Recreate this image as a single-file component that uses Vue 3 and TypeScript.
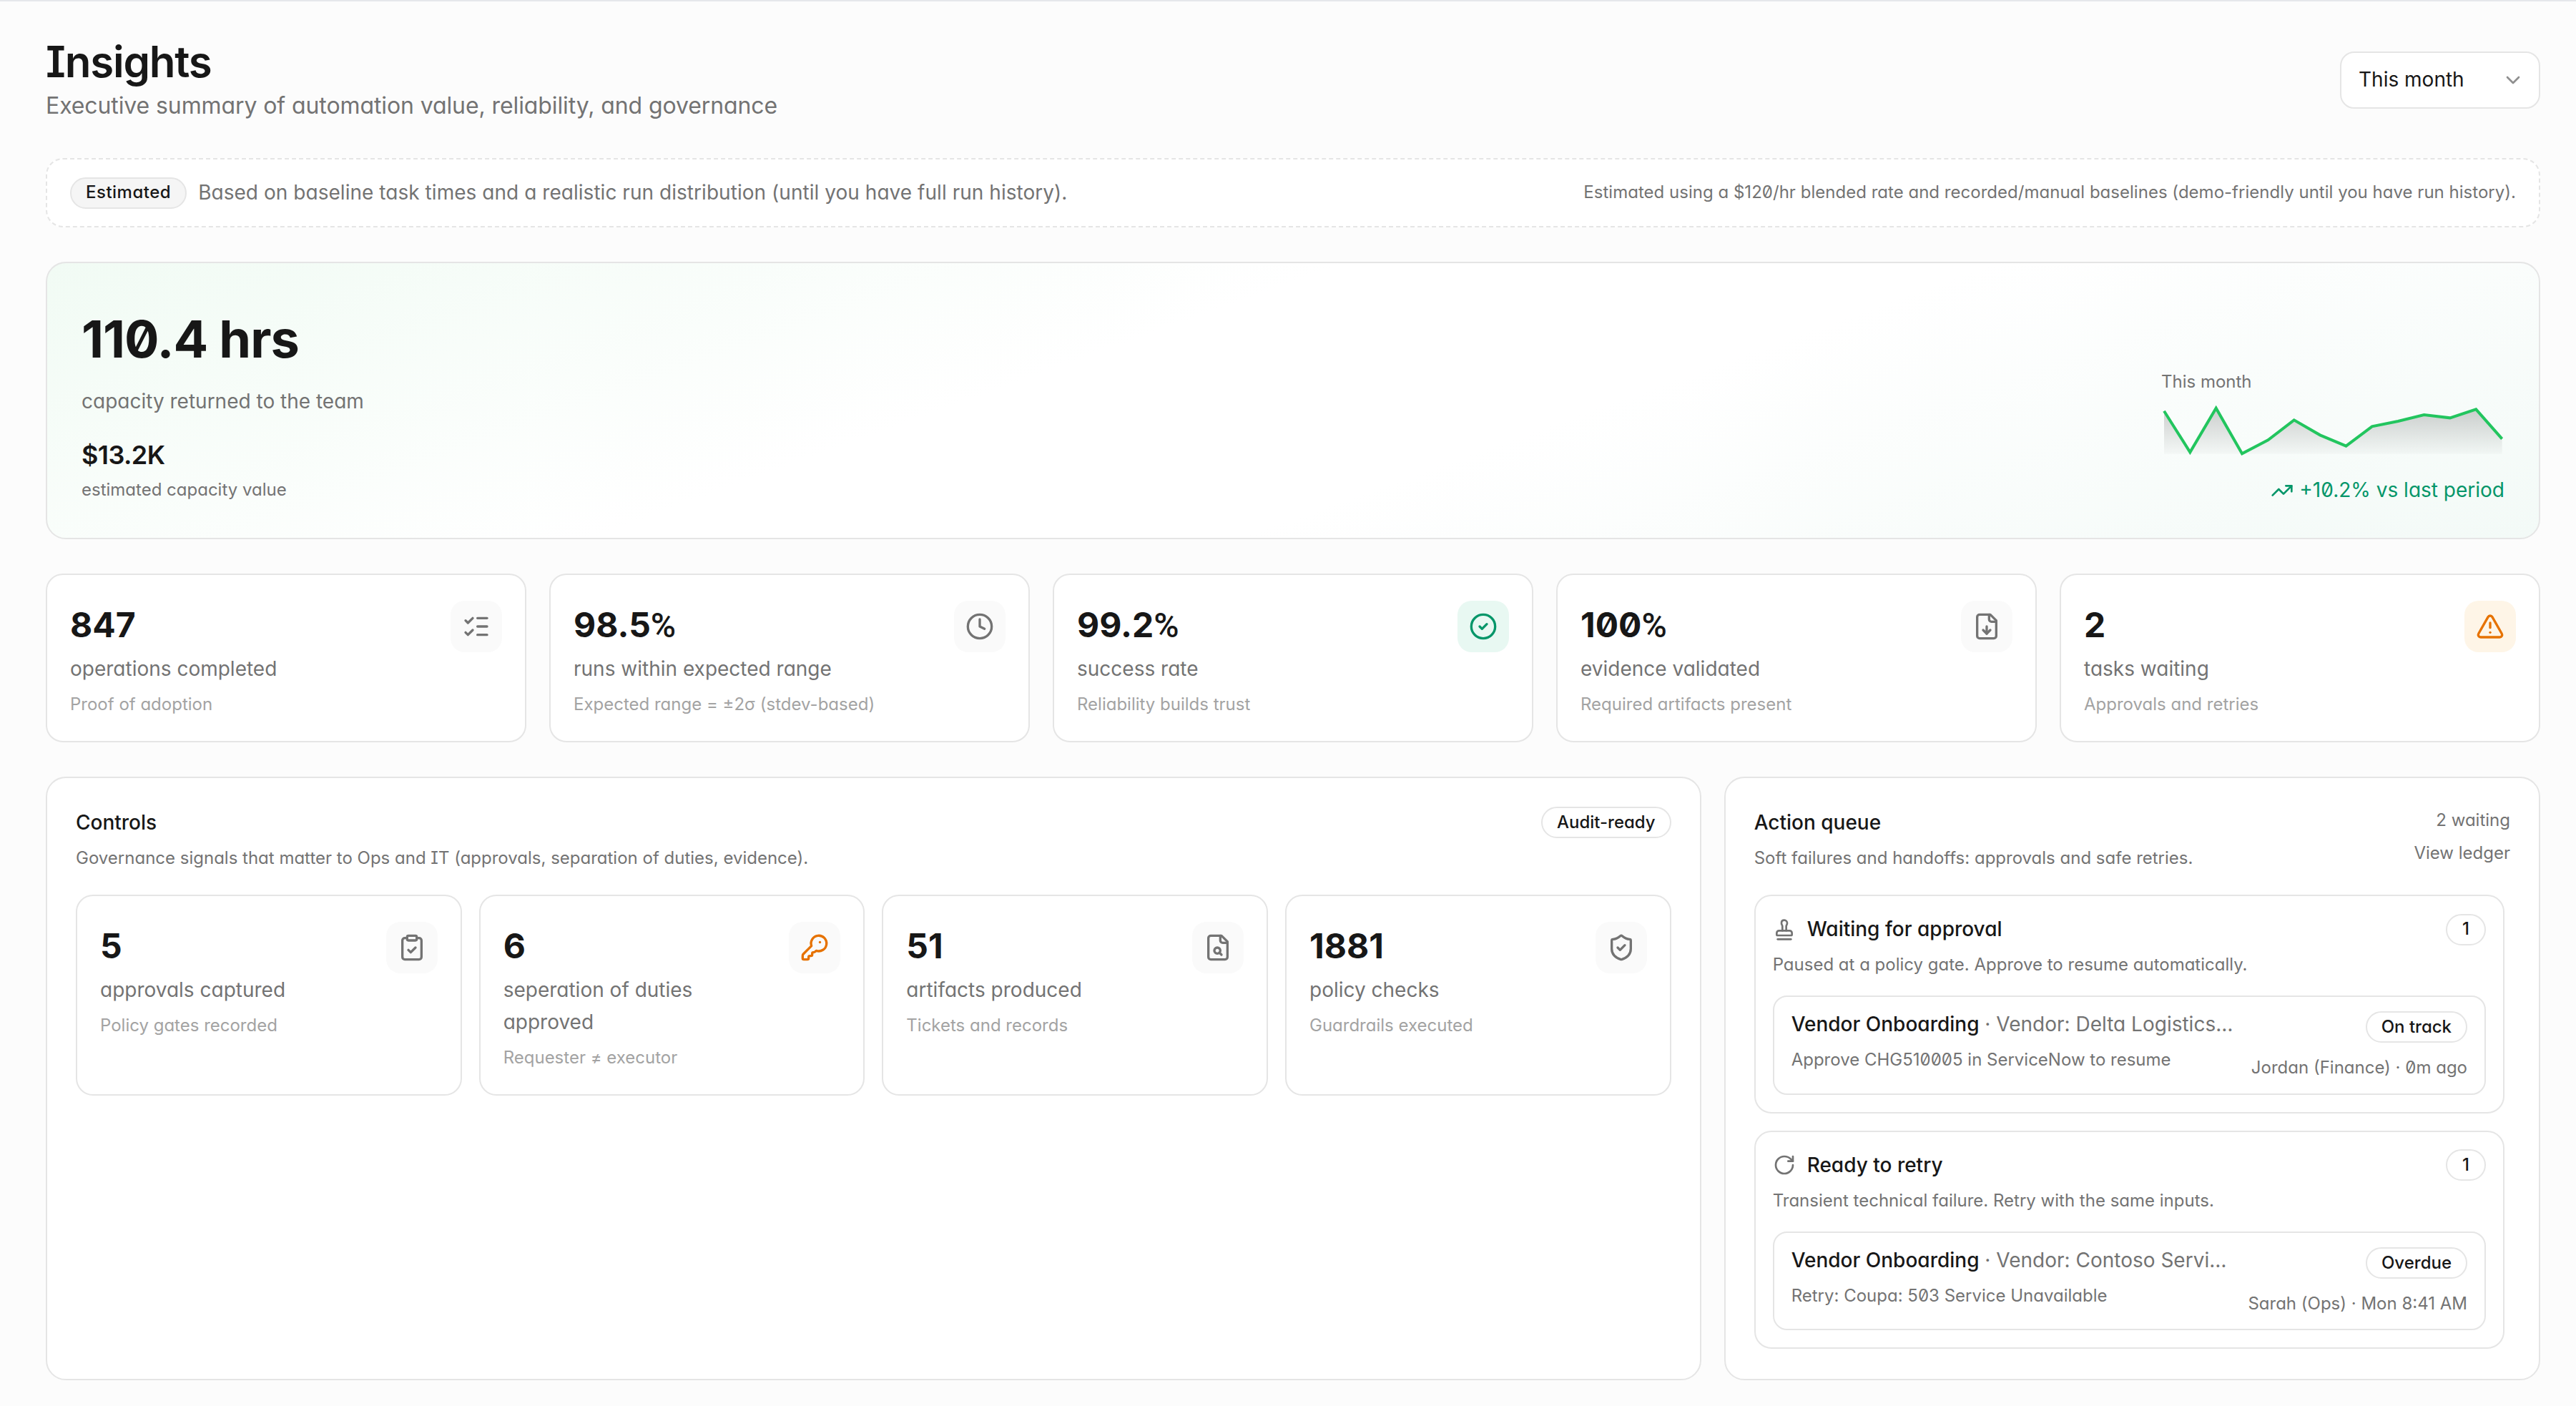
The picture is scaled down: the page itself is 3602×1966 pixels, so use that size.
<script setup lang="ts">
import { h } from 'vue'

const icons: Record<string, string[]> = {
  listChecks: ['M13 5h8', 'M13 12h8', 'M13 19h8', 'm3 17 2 2 4-4', 'm3 7 2 2 4-4'],
  clock: ['M22 12a10 10 0 1 1-20 0a10 10 0 1 1 20 0', 'M12 6v6l4 2'],
  circleCheck: ['M22 12a10 10 0 1 1-20 0a10 10 0 1 1 20 0', 'm9 12 2 2 4-4'],
  fileDown: [
    'M15 2H6a2 2 0 0 0-2 2v16a2 2 0 0 0 2 2h12a2 2 0 0 0 2-2V7Z',
    'M14 2v4a2 2 0 0 0 2 2h4',
    'M12 18v-6',
    'm9 15 3 3 3-3',
  ],
  alert: [
    'm21.73 18-8-14a2 2 0 0 0-3.48 0l-8 14A2 2 0 0 0 4 21h16a2 2 0 0 0 1.73-3',
    'M12 9v4',
    'M12 17h.01',
  ],
  clipboardCheck: [
    'M9 2h6a1 1 0 0 1 1 1v2a1 1 0 0 1-1 1H9a1 1 0 0 1-1-1V3a1 1 0 0 1 1-1z',
    'M16 4h2a2 2 0 0 1 2 2v14a2 2 0 0 1-2 2H6a2 2 0 0 1-2-2V6a2 2 0 0 1 2-2h2',
    'm9 14 2 2 4-4',
  ],
  key: [
    'M2.586 17.414A2 2 0 0 0 2 18.828V21a1 1 0 0 0 1 1h3a1 1 0 0 0 1-1v-1a1 1 0 0 1 1-1h1a1 1 0 0 0 1-1v-1a1 1 0 0 1 1-1h.172a2 2 0 0 0 1.414-.586l.814-.814a6.5 6.5 0 1 0-4-4z',
    'M16.5 7.5h.01',
  ],
  fileSearch: [
    'M15 2H6a2 2 0 0 0-2 2v16a2 2 0 0 0 2 2h12a2 2 0 0 0 2-2V7Z',
    'M14 2v4a2 2 0 0 0 2 2h4',
    'M14 14.5a2.5 2.5 0 1 1-5 0a2.5 2.5 0 1 1 5 0',
    'M13.3 16.3 15 18',
  ],
  shieldCheck: [
    'M20 13c0 5-3.5 7.5-7.66 8.95a1 1 0 0 1-.67-.01C7.5 20.5 4 18 4 13V6a1 1 0 0 1 1-1c2 0 4.5-1.2 6.24-2.72a1.17 1.17 0 0 1 1.52 0C14.51 3.81 17 5 19 5a1 1 0 0 1 1 1z',
    'm9 12 2 2 4-4',
  ],
  stamp: [
    'M5 22h14',
    'M19.27 13.73A2.5 2.5 0 0 0 17.5 13h-11A2.5 2.5 0 0 0 4 15.5V17a1 1 0 0 0 1 1h14a1 1 0 0 0 1-1v-1.5c0-.66-.26-1.3-.73-1.77Z',
    'M14 13V8.5C14 7 15 7 15 5a3 3 0 0 0-3-3c-1.66 0-3 1-3 3s1 2 1 3.5V13',
  ],
  rotate: ['M21 12a9 9 0 1 1-9-9c2.52 0 4.93 1 6.74 2.74L21 8', 'M21 3v5h-5'],
  trending: ['M16 7h6v6', 'm22 7-8.5 8.5-5-5L2 17'],
  chevron: ['m6 9 6 6 6-6'],
}

const Icon = (props: { name: string; size: number }) =>
  h(
    'svg',
    {
      width: props.size,
      height: props.size,
      viewBox: '0 0 24 24',
      fill: 'none',
      stroke: 'currentColor',
      'stroke-width': 2,
      'stroke-linecap': 'round',
      'stroke-linejoin': 'round',
    },
    icons[props.name].map((d) => h('path', { d })),
  )

const stats = [
  { value: '847', label: 'operations completed', hint: 'Proof of adoption', icon: 'listChecks', tone: '' },
  { value: '98.5', unit: '%', label: 'runs within expected range', hint: 'Expected range = ±2σ (stdev-based)', icon: 'clock', tone: '' },
  { value: '99.2', unit: '%', label: 'success rate', hint: 'Reliability builds trust', icon: 'circleCheck', tone: 'good' },
  { value: '100', unit: '%', label: 'evidence validated', hint: 'Required artifacts present', icon: 'fileDown', tone: '' },
  { value: '2', label: 'tasks waiting', hint: 'Approvals and retries', icon: 'alert', tone: 'warn' },
]

const controls = [
  { value: '5', label: 'approvals captured', hint: 'Policy gates recorded', icon: 'clipboardCheck', tone: '' },
  { value: '6', label: 'seperation of duties approved', hint: 'Requester ≠ executor', icon: 'key', tone: 'key' },
  { value: '51', label: 'artifacts produced', hint: 'Tickets and records', icon: 'fileSearch', tone: '' },
  { value: '1881', label: 'policy checks', hint: 'Guardrails executed', icon: 'shieldCheck', tone: '' },
]

const queue = [
  {
    title: 'Waiting for approval',
    icon: 'stamp',
    sub: 'Paused at a policy gate. Approve to resume automatically.',
    count: 1,
    name: 'Vendor Onboarding',
    detail: 'Vendor: Delta Logistics…',
    action: 'Approve CHG510005 in ServiceNow to resume',
    status: 'On track',
    meta: 'Jordan (Finance) · 0m ago',
  },
  {
    title: 'Ready to retry',
    icon: 'rotate',
    sub: 'Transient technical failure. Retry with the same inputs.',
    count: 1,
    name: 'Vendor Onboarding',
    detail: 'Vendor: Contoso Servi…',
    action: 'Retry: Coupa: 503 Service Unavailable',
    status: 'Overdue',
    meta: 'Sarah (Ops) · Mon 8:41 AM',
  },
]

const spark = [
  [0, 3.85], [18.18, 32.67], [36.35, 1.83], [54.53, 33.67], [72.7, 24.17], [90.88, 10.17], [109.05, 20.67],
  [127.23, 28.33], [145.4, 14.67], [163.58, 11], [181.75, 6.5], [199.93, 8.67], [218.1, 2.67], [236.3, 23.33],
]
const sparkLine = spark.map((p) => p.join(',')).join(' ')
const sparkArea = `0,33.83 ${sparkLine} 236.3,33.83`
</script>

<template>
  <div class="page">
    <header class="top">
      <div>
        <h1>Insights</h1>
        <p class="lead">Executive summary of automation value, reliability, and governance</p>
      </div>
      <div class="select">
        <span>This month</span>
        <Icon name="chevron" :size="16" class="select-icon" />
      </div>
    </header>

    <div class="notice">
      <div class="notice-left">
        <span class="pill pill-grey">Estimated</span>
        <span class="notice-text">Based on baseline task times and a realistic run distribution (until you have full run history).</span>
      </div>
      <span class="notice-note">Estimated using a $120/hr blended rate and recorded/manual baselines (demo-friendly until you have run history).</span>
    </div>

    <section class="hero">
      <div>
        <div class="hero-value">110.4 hrs</div>
        <div class="hero-label">capacity returned to the team</div>
        <div class="hero-money">$13.2K</div>
        <div class="hero-hint">estimated capacity value</div>
      </div>
      <div class="trend">
        <div class="trend-label">This month</div>
        <svg class="spark" width="240" height="36" viewBox="-2 0 240 36">
          <defs>
            <linearGradient id="sparkFill" x1="0" y1="0" x2="0" y2="1">
              <stop offset="0" stop-color="#111" stop-opacity="0.2" />
              <stop offset="1" stop-color="#111" stop-opacity="0.02" />
            </linearGradient>
          </defs>
          <polygon :points="sparkArea" fill="url(#sparkFill)" />
          <polyline :points="sparkLine" fill="none" stroke="#22c55e" stroke-width="2" />
        </svg>
        <div class="trend-delta">
          <Icon name="trending" :size="16" />
          <span>+10.2% vs last period</span>
        </div>
      </div>
    </section>

    <section class="stats">
      <div v-for="s in stats" :key="s.label" class="metric">
        <div class="metric-row">
          <span class="metric-value">{{ s.value }}<span v-if="s.unit" class="metric-unit">{{ s.unit }}</span></span>
          <span class="metric-icon" :class="s.tone"><Icon :name="s.icon" :size="20" /></span>
        </div>
        <div class="metric-label">{{ s.label }}</div>
        <div class="metric-hint">{{ s.hint }}</div>
      </div>
    </section>

    <section class="bottom">
      <div class="panel panel-controls">
        <div class="panel-head">
          <div>
            <div class="panel-title">Controls</div>
            <div class="panel-sub">Governance signals that matter to Ops and IT (approvals, separation of duties, evidence).</div>
          </div>
          <span class="pill">Audit-ready</span>
        </div>
        <div class="control-grid">
          <div v-for="c in controls" :key="c.label" class="metric">
            <div class="metric-row">
              <span class="metric-value">{{ c.value }}</span>
              <span class="metric-icon" :class="c.tone"><Icon :name="c.icon" :size="20" /></span>
            </div>
            <div class="metric-label">{{ c.label }}</div>
            <div class="metric-hint">{{ c.hint }}</div>
          </div>
        </div>
      </div>

      <div class="panel panel-queue">
        <div class="panel-head">
          <div>
            <div class="panel-title">Action queue</div>
            <div class="panel-sub">Soft failures and handoffs: approvals and safe retries.</div>
          </div>
          <div class="queue-links">
            <div class="queue-count">2 waiting</div>
            <div class="queue-ledger">View ledger</div>
          </div>
        </div>
        <div class="queue-list">
          <div v-for="g in queue" :key="g.title" class="group">
            <div class="group-head">
              <div class="group-title">
                <Icon :name="g.icon" :size="16" class="group-icon" />
                <span>{{ g.title }}</span>
              </div>
              <span class="pill pill-count">{{ g.count }}</span>
            </div>
            <div class="group-sub">{{ g.sub }}</div>
            <div class="item">
              <div class="item-main">
                <div class="item-title"><b>{{ g.name }}</b> · {{ g.detail }}</div>
                <div class="item-action">{{ g.action }}</div>
              </div>
              <div class="item-side">
                <span class="pill">{{ g.status }}</span>
                <div class="item-meta">{{ g.meta }}</div>
              </div>
            </div>
          </div>
        </div>
      </div>
    </section>
  </div>
</template>

<style scoped>
.page {
  zoom: 2;
  box-sizing: border-box;
  min-height: 983px;
  padding: 24px 25px 18px 32px;
  border-top: 1px solid #e5e7eb;
  font-family: Inter, "Noto Sans", sans-serif;
  font-feature-settings: "cv11", "cv08", "zero";
  font-size: 14px;
  line-height: 1.6;
  color: #171717;
  display: flex;
  flex-direction: column;
}

.top {
  display: flex;
  align-items: center;
  justify-content: space-between;
}

h1 {
  margin: 0;
  font-size: 30px;
  line-height: 36px;
  font-weight: 600;
  letter-spacing: -0.6px;
}

.lead {
  margin: 0;
  font-size: 16px;
  line-height: 25.6px;
  letter-spacing: -0.05px;
  color: #737373;
}

.select {
  width: 140px;
  height: 40px;
  box-sizing: border-box;
  padding: 0 10px 0 12px;
  display: flex;
  align-items: center;
  justify-content: space-between;
  background: #fff;
  border: 1px solid #e5e5e5;
  border-radius: 10px;
}

.select-icon {
  color: #8f8f8f;
}

.notice {
  margin-top: 24px;
  padding: 12px 16px;
  display: flex;
  align-items: center;
  justify-content: space-between;
  background: #fff;
  border: 1px dashed #e5e5e5;
  border-radius: 12px;
}

.notice-left {
  display: flex;
  align-items: center;
  gap: 8px;
}

.notice-text {
  letter-spacing: 0.02px;
  color: #737373;
}

.notice-note {
  font-size: 12px;
  letter-spacing: 0.01px;
  color: #737373;
}

.pill {
  box-sizing: border-box;
  height: 22px;
  padding: 0 10px;
  display: inline-flex;
  align-items: center;
  flex: none;
  font-size: 12px;
  font-weight: 500;
  background: #fff;
  border: 1px solid #e5e5e5;
  border-radius: 999px;
}

.pill-grey {
  background: #f5f5f5;
  letter-spacing: 0.25px;
}

.pill-count {
  width: 28px;
  padding: 0;
  justify-content: center;
}

.hero {
  margin-top: 24px;
  padding: 24px;
  display: flex;
  align-items: flex-end;
  justify-content: space-between;
  background: linear-gradient(160deg, #f1fbf4 0%, #fff 40%, #fff 60%, #f3faf7 100%);
  border: 1px solid #e5e5e5;
  border-radius: 14px;
}

.hero-value {
  font-size: 36px;
  font-weight: 700;
  letter-spacing: -0.5px;
}

.hero-label {
  margin-top: 4px;
  color: #737373;
}

.hero-money {
  margin-top: 12px;
  font-size: 18px;
  font-weight: 600;
  letter-spacing: -0.3px;
}

.hero-hint {
  font-size: 12px;
  color: #737373;
}

.trend {
  margin-bottom: -2px;
  display: flex;
  flex-direction: column;
  align-items: flex-end;
}

.trend-label {
  align-self: flex-start;
  font-size: 12px;
  color: #737373;
}

.spark {
  display: block;
  margin-top: 7px;
}

.trend-delta {
  margin-top: 12px;
  display: flex;
  align-items: center;
  gap: 4px;
  color: #059669;
}

.stats {
  margin-top: 24px;
  display: grid;
  grid-template-columns: repeat(5, 1fr);
  gap: 16px;
}

.metric {
  padding: 16px;
  background: #fff;
  border: 1px solid #e5e5e5;
  border-radius: 12px;
}

.metric-row {
  display: flex;
  align-items: flex-start;
  justify-content: space-between;
}

.metric-value {
  font-size: 24px;
  font-weight: 700;
}

.metric-unit {
  font-family: Roboto, sans-serif;
  font-weight: 500;
  line-height: 1;
}

.metric-icon {
  width: 36px;
  height: 36px;
  margin-top: 2px;
  display: flex;
  align-items: center;
  justify-content: center;
  background: #fafafa;
  border-radius: 10px;
  color: #737373;
}

.metric-icon.good {
  background: #e8f8f2;
  color: #059669;
}

.metric-icon.warn {
  background: #fef5e7;
  color: #e67200;
}

.metric-icon.key {
  color: #e67200;
}

.metric-label {
  max-width: 190px;
  color: #737373;
}

.metric-hint {
  margin-top: 4px;
  font-size: 12px;
  color: #a3a3a3;
}

.bottom {
  margin-top: 24px;
  flex: 1;
  display: grid;
  grid-template-columns: repeat(12, 1fr);
  gap: 16px;
}

.panel {
  padding: 20px;
  background: #fff;
  border: 1px solid #e5e5e5;
  border-radius: 14px;
}

.panel-controls {
  grid-column: span 8;
}

.panel-queue {
  grid-column: span 4;
}

.panel-head {
  display: flex;
  align-items: flex-start;
  justify-content: space-between;
}

.panel-title {
  font-weight: 500;
}

.panel-sub {
  margin-top: 4px;
  font-size: 12px;
  color: #737373;
}

.control-grid {
  margin-top: 16px;
  display: grid;
  grid-template-columns: repeat(4, 1fr);
  gap: 12px;
}

.queue-links {
  font-size: 12px;
  text-align: right;
}

.queue-count {
  color: #737373;
}

.queue-ledger {
  margin-top: 4px;
  color: #737373;
}

.queue-list {
  margin-top: 16px;
  padding-right: 4px;
  display: flex;
  flex-direction: column;
  gap: 12px;
}

.group {
  padding: 12px;
  border: 1px solid #e5e5e5;
  border-radius: 12px;
}

.group-head {
  display: flex;
  align-items: center;
  justify-content: space-between;
}

.group-title {
  display: flex;
  align-items: center;
  gap: 8px;
  font-weight: 500;
}

.group-icon {
  color: #737373;
}

.group-sub {
  margin-top: 4px;
  font-size: 12px;
  color: #737373;
}

.item {
  margin-top: 12px;
  padding: 10px 12px 8px;
  display: flex;
  gap: 12px;
  border: 1px solid #e5e5e5;
  border-radius: 10px;
}

.item-main {
  flex: 1;
  min-width: 0;
  margin-top: -2px;
}

.item-title {
  white-space: nowrap;
  color: #737373;
}

.item-title b {
  font-weight: 500;
  color: #171717;
}

.item-action {
  margin-top: 4px;
  font-size: 12px;
  color: #737373;
}

.item-side {
  flex: none;
  display: flex;
  flex-direction: column;
  align-items: flex-end;
  gap: 8px;
}

.item-meta {
  font-size: 12px;
  color: #737373;
}
</style>

<style>
html,
body {
  margin: 0;
  background: #fcfcfc;
}
</style>
